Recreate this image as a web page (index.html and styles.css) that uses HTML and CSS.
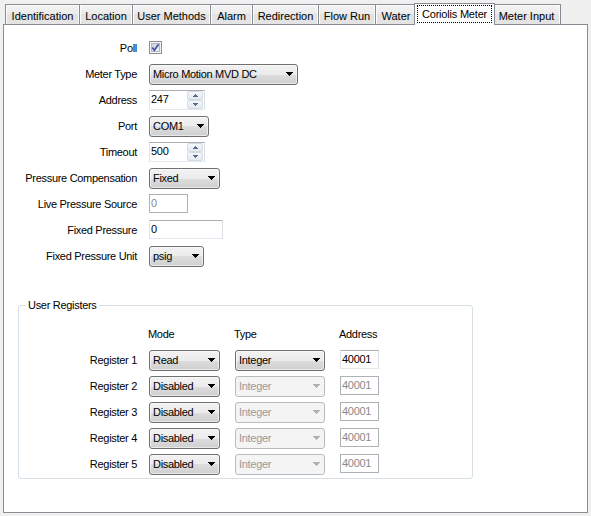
FILE: index.html
```html
<!DOCTYPE html>
<html>
<head>
<meta charset="utf-8">
<link rel="stylesheet" href="styles.css">
</head>
<body>
<div class="window">
  <div class="tabs">
    <div class="tab t-ident">Identification</div>
    <div class="tab t-loc">Location</div>
    <div class="tab t-user">User Methods</div>
    <div class="tab t-alarm">Alarm</div>
    <div class="tab t-redir">Redirection</div>
    <div class="tab t-flow">Flow Run</div>
    <div class="tab t-water">Water</div>
    <div class="tab active"><span class="focus">Coriolis Meter</span></div>
    <div class="tab t-meter">Meter Input</div>
  </div>
  <div class="panel">
    <div class="form">
      <div class="lbl">Poll</div>
      <div class="check">
        <svg width="13" height="13" viewBox="0 0 13 13">
          <defs>
            <linearGradient id="cbg" x1="0" y1="0" x2="1" y2="1">
              <stop offset="0" stop-color="#cbd0d8"/>
              <stop offset="1" stop-color="#f4f5f7"/>
            </linearGradient>
          </defs>
          <rect x="0.5" y="0.5" width="12" height="12" fill="#f6f6f6" stroke="#8e8f8f"/>
          <rect x="2.5" y="2.5" width="8" height="8" fill="url(#cbg)" stroke="#b4b8be"/>
          <path d="M3.3 6.6 L5.3 9.2 L9.6 3.2" fill="none" stroke="#3b58a8" stroke-width="1.7"/>
        </svg>
      </div>

      <div class="lbl">Meter Type</div>
      <div class="combo w-meter"><span class="ctext">Micro Motion MVD DC</span><svg class="arrow" width="7" height="4" viewBox="0 0 7 4"><path d="M0 0h7v1H0z M1 1h5v1H1z M2 2h3v1H2z M3 3h1v1H3z"/></svg></div>

      <div class="lbl">Address</div>
      <div class="spin"><span class="val">247</span><span class="btns"><span class="btn"><svg width="5" height="3" viewBox="0 0 5 3"><path d="M2 0h1v1H2z M1 1h3v1H1z M0 2h5v1H0z"/></svg></span><span class="btn"><svg width="5" height="3" viewBox="0 0 5 3"><path d="M0 0h5v1H0z M1 1h3v1H1z M2 2h1v1H2z"/></svg></span></span></div>

      <div class="lbl">Port</div>
      <div class="combo w-port"><span class="ctext">COM1</span><svg class="arrow" width="7" height="4" viewBox="0 0 7 4"><path d="M0 0h7v1H0z M1 1h5v1H1z M2 2h3v1H2z M3 3h1v1H3z"/></svg></div>

      <div class="lbl">Timeout</div>
      <div class="spin"><span class="val">500</span><span class="btns"><span class="btn"><svg width="5" height="3" viewBox="0 0 5 3"><path d="M2 0h1v1H2z M1 1h3v1H1z M0 2h5v1H0z"/></svg></span><span class="btn"><svg width="5" height="3" viewBox="0 0 5 3"><path d="M0 0h5v1H0z M1 1h3v1H1z M2 2h1v1H2z"/></svg></span></span></div>

      <div class="lbl">Pressure Compensation</div>
      <div class="combo w-comp"><span class="ctext">Fixed</span><svg class="arrow" width="7" height="4" viewBox="0 0 7 4"><path d="M0 0h7v1H0z M1 1h5v1H1z M2 2h3v1H2z M3 3h1v1H3z"/></svg></div>

      <div class="lbl">Live Pressure Source</div>
      <div class="text dis w-live">0</div>

      <div class="lbl">Fixed Pressure</div>
      <div class="text w-fixed">0</div>

      <div class="lbl">Fixed Pressure Unit</div>
      <div class="combo w-unit"><span class="ctext">psig</span><svg class="arrow" width="7" height="4" viewBox="0 0 7 4"><path d="M0 0h7v1H0z M1 1h5v1H1z M2 2h3v1H2z M3 3h1v1H3z"/></svg></div>
    </div>

    <fieldset class="group">
      <legend>User Registers</legend>
      <div class="regs">
        <div></div>
        <div class="hdr">Mode</div>
        <div class="hdr">Type</div>
        <div class="hdr">Address</div>

        <div class="lbl">Register 1</div>
        <div class="combo w-mode"><span class="ctext">Read</span><svg class="arrow" width="7" height="4" viewBox="0 0 7 4"><path d="M0 0h7v1H0z M1 1h5v1H1z M2 2h3v1H2z M3 3h1v1H3z"/></svg></div>
        <div class="combo w-type"><span class="ctext">Integer</span><svg class="arrow" width="7" height="4" viewBox="0 0 7 4"><path d="M0 0h7v1H0z M1 1h5v1H1z M2 2h3v1H2z M3 3h1v1H3z"/></svg></div>
        <div class="text w-addr">40001</div>

        <div class="lbl">Register 2</div>
        <div class="combo w-mode"><span class="ctext">Disabled</span><svg class="arrow" width="7" height="4" viewBox="0 0 7 4"><path d="M0 0h7v1H0z M1 1h5v1H1z M2 2h3v1H2z M3 3h1v1H3z"/></svg></div>
        <div class="combo dis w-type"><span class="ctext">Integer</span><svg class="arrow" width="7" height="4" viewBox="0 0 7 4"><path d="M0 0h7v1H0z M1 1h5v1H1z M2 2h3v1H2z M3 3h1v1H3z"/></svg></div>
        <div class="text dis w-addr">40001</div>

        <div class="lbl">Register 3</div>
        <div class="combo w-mode"><span class="ctext">Disabled</span><svg class="arrow" width="7" height="4" viewBox="0 0 7 4"><path d="M0 0h7v1H0z M1 1h5v1H1z M2 2h3v1H2z M3 3h1v1H3z"/></svg></div>
        <div class="combo dis w-type"><span class="ctext">Integer</span><svg class="arrow" width="7" height="4" viewBox="0 0 7 4"><path d="M0 0h7v1H0z M1 1h5v1H1z M2 2h3v1H2z M3 3h1v1H3z"/></svg></div>
        <div class="text dis w-addr">40001</div>

        <div class="lbl">Register 4</div>
        <div class="combo w-mode"><span class="ctext">Disabled</span><svg class="arrow" width="7" height="4" viewBox="0 0 7 4"><path d="M0 0h7v1H0z M1 1h5v1H1z M2 2h3v1H2z M3 3h1v1H3z"/></svg></div>
        <div class="combo dis w-type"><span class="ctext">Integer</span><svg class="arrow" width="7" height="4" viewBox="0 0 7 4"><path d="M0 0h7v1H0z M1 1h5v1H1z M2 2h3v1H2z M3 3h1v1H3z"/></svg></div>
        <div class="text dis w-addr">40001</div>

        <div class="lbl">Register 5</div>
        <div class="combo w-mode"><span class="ctext">Disabled</span><svg class="arrow" width="7" height="4" viewBox="0 0 7 4"><path d="M0 0h7v1H0z M1 1h5v1H1z M2 2h3v1H2z M3 3h1v1H3z"/></svg></div>
        <div class="combo dis w-type"><span class="ctext">Integer</span><svg class="arrow" width="7" height="4" viewBox="0 0 7 4"><path d="M0 0h7v1H0z M1 1h5v1H1z M2 2h3v1H2z M3 3h1v1H3z"/></svg></div>
        <div class="text dis w-addr">40001</div>
      </div>
    </fieldset>
  </div>
</div>
</body>
</html>
```

FILE: styles.css
```css
html, body {
  margin: 0;
  padding: 0;
}
body {
  background: #f0f0f0;
  font-family: "Liberation Sans", Arial, sans-serif;
  font-size: 11px;
  color: #000;
}
.window {
  width: 591px;
  height: 516px;
  overflow: hidden;
}

/* Tabs */
.tabs {
  display: flex;
  align-items: flex-end;
  height: 24px;
  padding-left: 5px;
  box-sizing: border-box;
}
.tab {
  box-sizing: border-box;
  height: 20px;
  border: 1px solid #898c95;
  border-bottom: none;
  margin-right: -1px;
  background: linear-gradient(#f3f3f3, #ebebeb 50%, #e2e2e2 50%, #e4e4e4);
  box-shadow: inset 1px 1px 0 #fcfcfc, inset -1px 0 0 #fcfcfc;
  text-align: center;
  padding-top: 3px;
  line-height: 16px;
  white-space: nowrap;
}
.t-ident { width: 75px; }
.t-loc { width: 54px; }
.t-user { width: 79px; }
.t-alarm { width: 43px; }
.t-redir { width: 67px; }
.t-flow { width: 58px; }
.t-water { width: 42px; }
.t-meter { width: 69px; }
.tab.active {
  width: 81px;
  height: 22px;
  margin: 0 -3px -1px -2px;
  padding: 1px 2px 0;
  background: #fff;
  box-shadow: none;
  position: relative;
  z-index: 1;
}
.tab.active .focus {
  display: block;
  box-sizing: border-box;
  height: 18px;
  border: 1px dotted #000;
  line-height: 16px;
  letter-spacing: -0.2px;
}

/* Panel */
.panel {
  box-sizing: border-box;
  margin-left: 3px;
  width: 585px;
  height: 489px;
  border: 1px solid #898c95;
  background: #fff;
  padding-top: 10px;
}

.form {
  display: grid;
  grid-template-columns: 145px auto;
  grid-auto-rows: 26px;
  align-items: center;
  justify-items: start;
}
.lbl {
  justify-self: end;
  padding-right: 12px;
  letter-spacing: -0.3px;
  white-space: nowrap;
}
.check {
  width: 13px;
  height: 13px;
  display: flex;
  margin-top: -1px;
}

/* Combo box */
.combo {
  box-sizing: border-box;
  height: 21px;
  border: 1px solid #707070;
  border-radius: 3px;
  background: linear-gradient(#f2f2f2, #ebebeb 50%, #dddddd 50%, #cfcfcf);
  box-shadow: inset 0 0 0 1px rgba(255, 255, 255, 0.55);
  display: flex;
  align-items: center;
  justify-content: space-between;
  padding: 0 4px 0 3px;
}
.ctext {
  letter-spacing: -0.3px;
  line-height: 19px;
  white-space: nowrap;
}
.arrow {
  display: block;
  fill: #000;
  flex: none;
}
.combo.dis {
  border-color: #b8bcbf;
  background: #f4f4f4;
  box-shadow: none;
  color: #9a9a9a;
}
.combo.dis .arrow {
  fill: #b0b0b0;
}
.w-meter { width: 149px; }
.w-port { width: 60px; }
.w-comp { width: 71px; }
.w-unit { width: 55px; }
.w-mode { width: 71px; }
.w-type { width: 90px; }

/* Text box */
.text {
  box-sizing: border-box;
  height: 19px;
  border: 1px solid;
  border-color: #abadb3 #dbdfe6 #e3e9ef #e2e3ea;
  background: #fff;
  padding: 0 2px 0 1px;
  line-height: 16px;
  letter-spacing: -0.3px;
  margin-top: -1px;
}
.text.dis {
  border-color: #adb2b5;
  color: #8a8a8a;
}
.w-live { width: 39px; }
.w-fixed { width: 74px; }
.w-addr { width: 39px; }

/* Spinner */
.spin {
  box-sizing: border-box;
  width: 56px;
  height: 20px;
  border: 1px solid;
  border-color: #abadb3 #dbdfe6 #e3e9ef #e2e3ea;
  background: #fff;
  display: flex;
  margin-top: -1px;
}
.spin .val {
  flex: 1;
  padding-left: 1px;
  line-height: 16px;
  letter-spacing: -0.3px;
}
.spin .btns {
  width: 16px;
  display: flex;
  flex-direction: column;
  padding: 0 1px 0 0;
}
.spin .btn {
  flex: 1;
  box-sizing: border-box;
  border: 1px solid #d3dbe4;
  border-radius: 2px;
  background: linear-gradient(#f5f7fa, #e3e9f0);
  display: flex;
  align-items: center;
  justify-content: center;
}
.spin .btn svg {
  display: block;
  fill: #56698c;
}

/* Group box */
fieldset.group {
  box-sizing: border-box;
  margin: 29px 0 0 14px;
  width: 455px;
  border: 1px solid #d5dfe5;
  border-radius: 3px;
  padding: 9px 0 1px;
  min-width: 0;
}
fieldset.group legend {
  margin-left: 7px;
  padding: 0 2px;
  line-height: 14px;
  letter-spacing: -0.3px;
}
.regs {
  display: grid;
  grid-template-columns: 130px 86px 105px auto;
  grid-auto-rows: 26px;
  align-items: center;
  justify-items: start;
}
.hdr {
  letter-spacing: -0.3px;
  margin-left: -1px;
}
```
